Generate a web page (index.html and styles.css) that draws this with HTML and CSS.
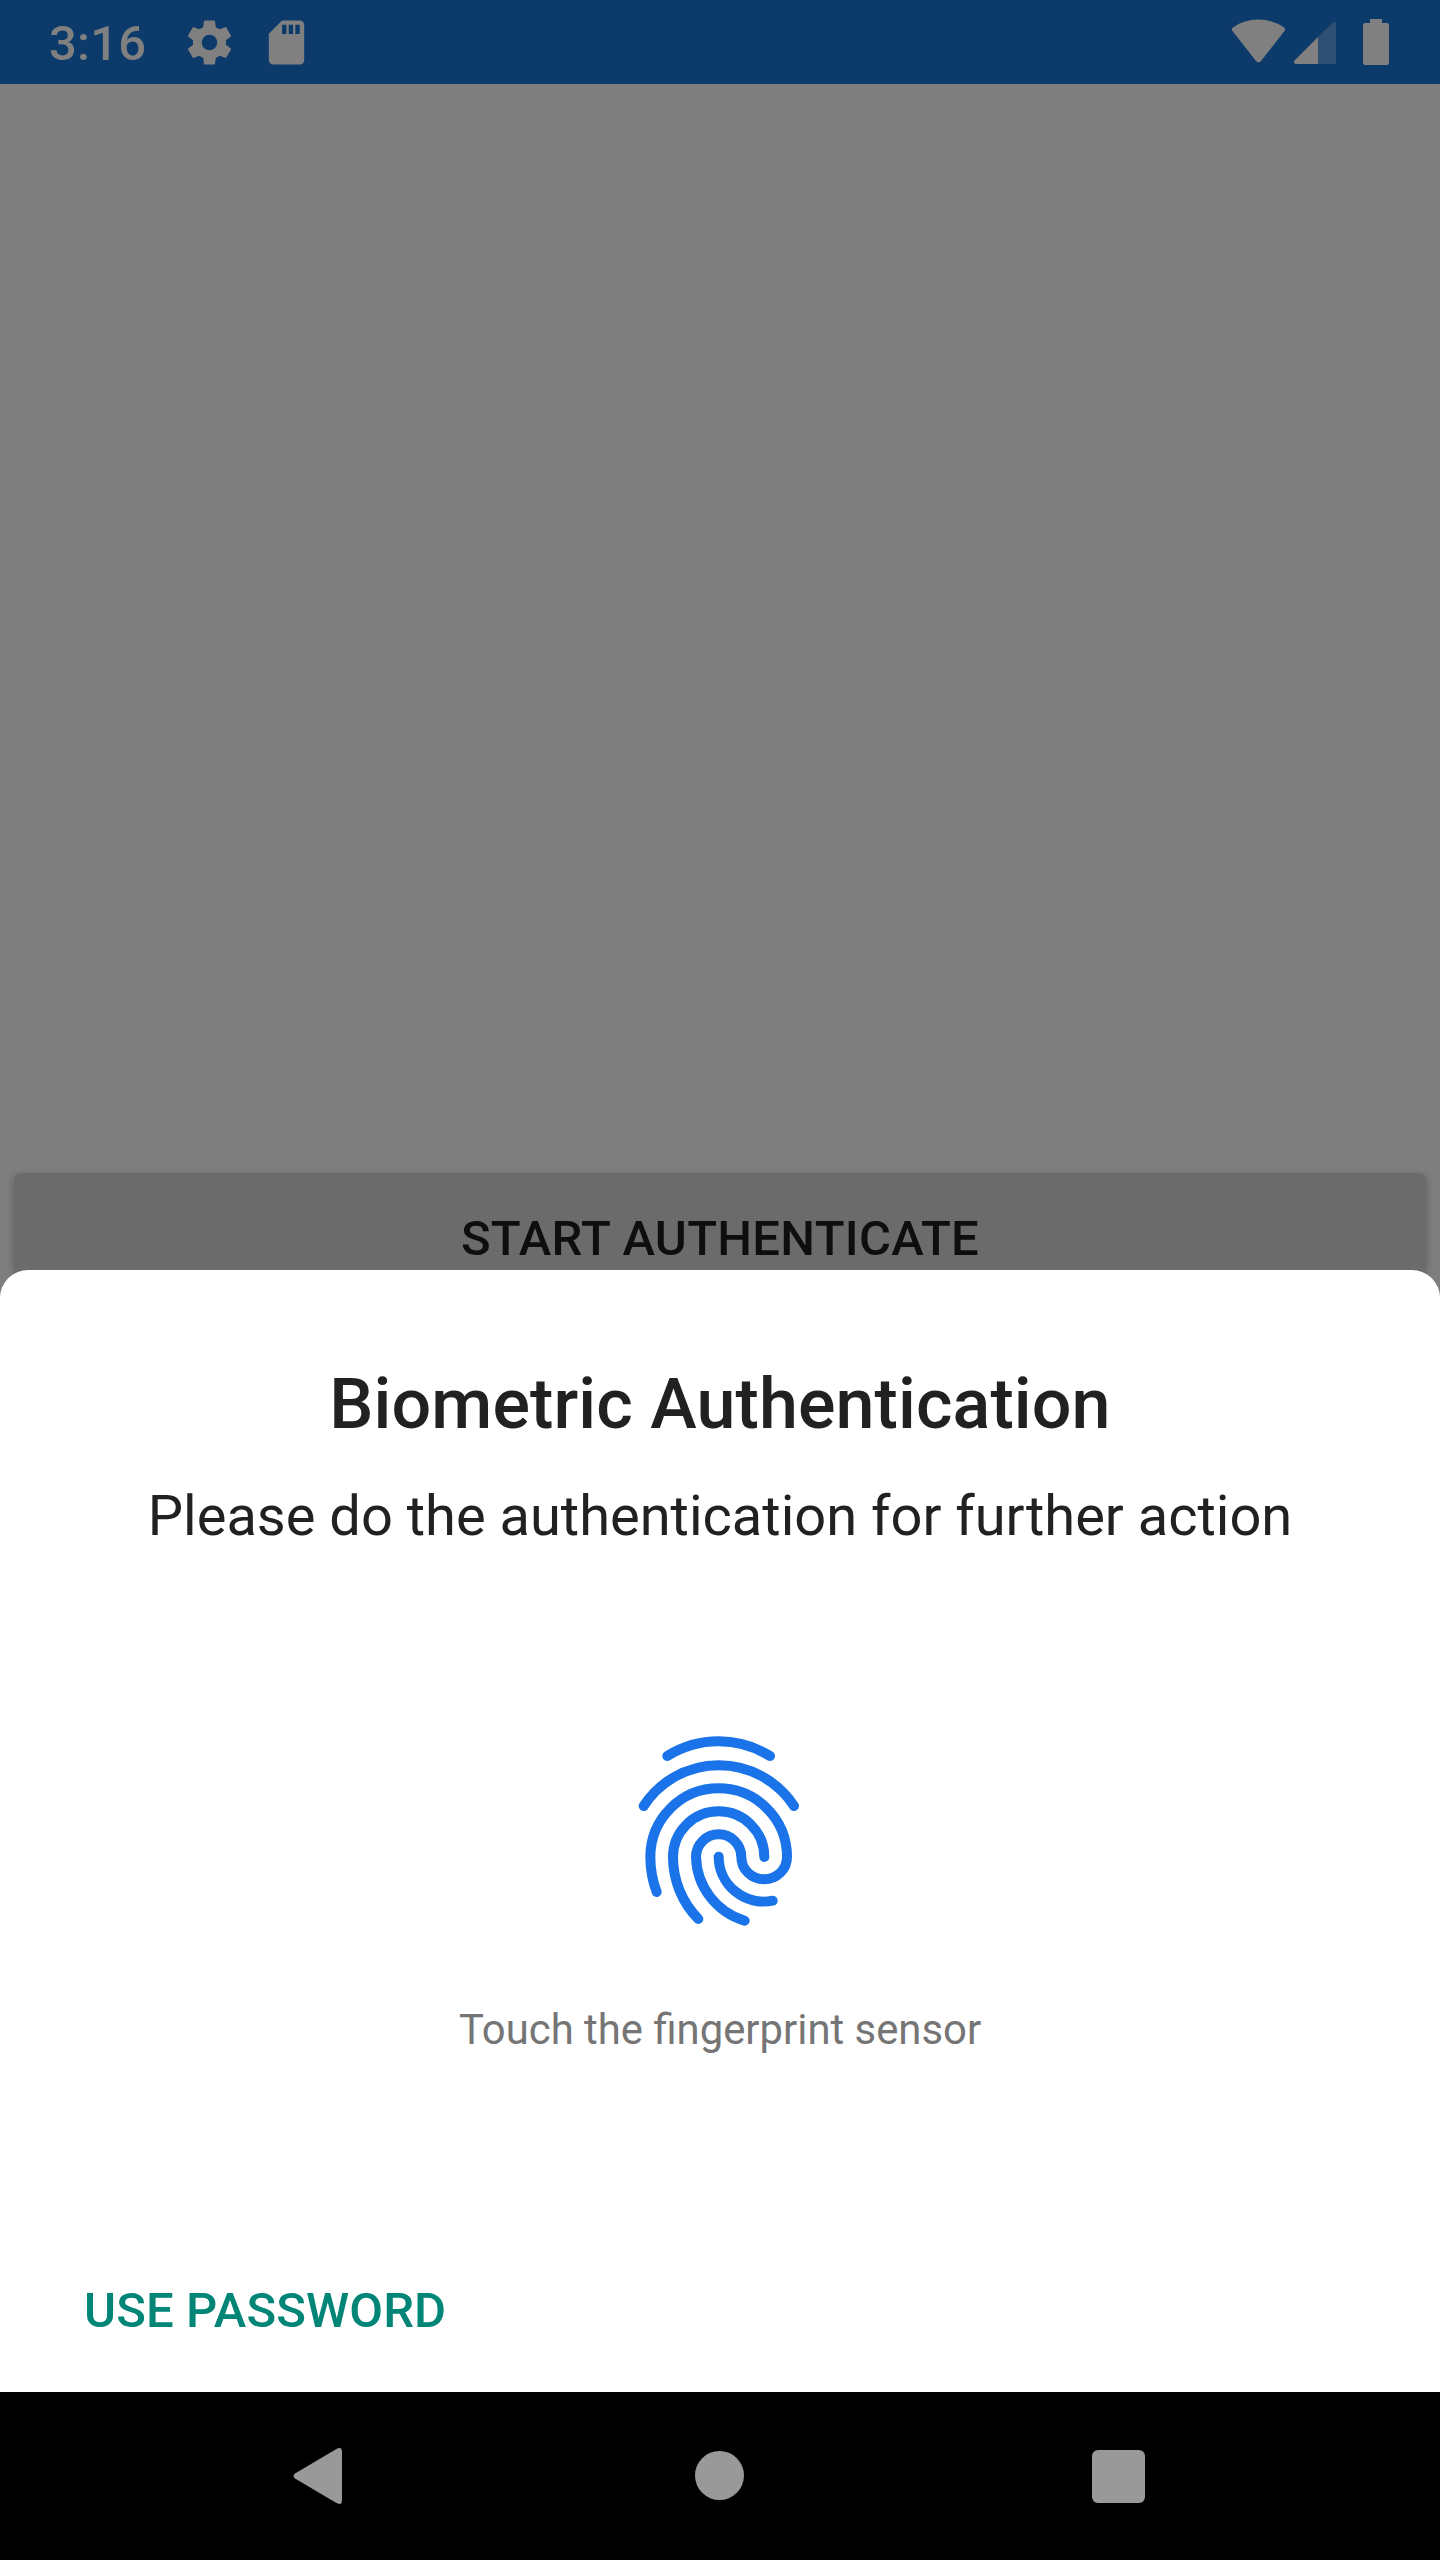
FILE: index.html
```html
<!DOCTYPE html>
<html lang="en">
<head>
<meta charset="utf-8">
<title>Biometric Authentication</title>
<link rel="stylesheet" href="styles.css">
</head>
<body>
<header class="status">
  <span class="clock">3:16</span>
  <svg class="gear" viewBox="0 0 24 24"><path d="M19.43 12.98c.04-.32.07-.64.07-.98s-.03-.66-.07-.98l2.11-1.65c.19-.15.24-.42.12-.64l-2-3.46c-.12-.22-.39-.3-.61-.22l-2.49 1c-.52-.4-1.08-.73-1.69-.98l-.38-2.65C14.46 2.18 14.25 2 14 2h-4c-.25 0-.46.18-.49.42l-.38 2.65c-.61.25-1.17.59-1.69.98l-2.49-1c-.23-.09-.49 0-.61.22l-2 3.46c-.13.22-.07.49.12.64l2.11 1.65c-.04.32-.07.65-.07.98s.03.66.07.98l-2.11 1.65c-.19.15-.24.42-.12.64l2 3.46c.12.22.39.3.61.22l2.49-1c.52.4 1.08.73 1.69.98l.38 2.65c.03.24.24.42.49.42h4c.25 0 .46-.18.49-.42l.38-2.65c.61-.25 1.17-.59 1.69-.98l2.49 1c.23.09.49 0 .61-.22l2-3.46c.12-.22.07-.49-.12-.64l-2.11-1.65zM12 15.5c-1.93 0-3.5-1.57-3.5-3.5s1.57-3.5 3.5-3.5 3.5 1.57 3.5 3.5-1.57 3.5-3.5 3.5z"/></svg>
  <svg class="card" viewBox="0 0 24 24"><path d="M18 2h-8L4 8v12c0 1.1.9 2 2 2h12c1.1 0 2-.9 2-2V4c0-1.1-.9-2-2-2zm-6 6.2h-2V4h2v4.200zm3 0h-2V4h2v4.200zm3 0h-2V4h2v4.200z"/></svg>
  <svg class="radio" viewBox="0 0 160 84">
    <path d="M2.500 31Q1 29 3 27.500Q14 19.600 28.500 19.600Q43 19.600 54 27.500Q56 29 54.500 31L31 61Q28.500 63.500 26 61Z"/>
    <path class="weak" d="M88 37L102.500 22.700Q106 21 106 24V62Q106 64 104 64H88Z"/>
    <path d="M88 37V64H66Q62.500 63 64.500 60.500Z"/>
    <path d="M140 19h12v4h5q2 0 2 2v38q0 2-2 2h-22q-2 0-2-2V25q0-2 2-2h5z"/>
  </svg>
</header>
<main class="screen"><div class="start">START AUTHENTICATE</div></main>
<section class="sheet">
  <h1 class="title">Biometric Authentication</h1>
  <p class="subtitle">Please do the authentication for further action</p>
  <svg class="finger" viewBox="0 0 720 780">
    <path d="M202 168A291 291 0 0 1 510 168"/>
    <path d="M131 318A269 269 0 0 1 582 318"/>
    <path d="M170 576A300 300 0 0 1 151 471A205 206 0 0 1 561 471A68.500 67 0 0 1 424 471A68 68 0 0 0 288 471A205 205 0 0 0 434 662"/>
    <path d="M295 657A265 265 0 0 1 219 471A137 137 0 0 1 493 471"/>
    <path d="M356 470A135 135 0 0 0 518 602"/>
  </svg>
  <p class="hint">Touch the fingerprint sensor</p>
  <a class="password">USE PASSWORD</a>
</section>
<nav class="nav">
  <svg class="back" viewBox="0 0 50 56"><path d="M43 1.200Q49 -2 49 4V52Q49 58 43 54.800L2 30.500Q-1 28 2 25.500Z"/></svg>
  <svg class="home" viewBox="0 0 50 50"><circle cx="24.500" cy="24.500" r="24.500"/></svg>
  <span class="recent"></span>
</nav>
</body>
</html>
```
FILE: styles.css
```css
body {
  margin: 0;
  width: 1440px;
  height: 2560px;
  overflow: hidden;
  display: flex;
  flex-direction: column;
  font-family: Roboto, sans-serif;
  background: #7e7e7e;
}
.status {
  flex: none;
  height: 84px;
  box-sizing: border-box;
  padding-left: 49px;
  display: flex;
  align-items: center;
  background: #0c3b6b;
  fill: #808080;
}
.clock { width: 134px; padding-top: 4px; font-size: 49px; font-weight: 500; line-height: 58px; letter-spacing: .2px; color: #808080; }
.gear, .card { width: 53px; height: 53px; }
.card { margin-left: 24px; }
.radio { width: 160px; height: 84px; margin-left: auto; margin-right: 50px; }
.weak { fill: #2f5072; }
.screen {
  flex: none;
  height: 1186px;
  display: flex;
  flex-direction: column;
  justify-content: flex-end;
}
.start {
  height: 97px;
  margin: 0 14px;
  box-sizing: border-box;
  padding-top: 37px;
  border-radius: 7px 7px 0 0;
  background: #6b6b6b;
  box-shadow: 0 3px 9px rgba(0, 0, 0, .25);
  color: #0e0e0e;
  font-size: 49px;
  font-weight: 500;
  line-height: 58px;
  letter-spacing: .28px;
  text-align: center;
  white-space: nowrap;
}
.sheet {
  position: relative;
  flex: none;
  height: 1122px;
  display: flex;
  flex-direction: column;
  align-items: center;
  background: #fff;
  border-radius: 28px 28px 0 0;
  color: #212121;
}
.title { margin: 93px 0 0; font-size: 70px; font-weight: 500; line-height: 82px; letter-spacing: .1px; }
.subtitle { margin: 38px 0 0; font-size: 56px; line-height: 66px; }
.finger {
  width: 240px;
  height: 260px;
  margin-top: 151px;
  fill: none;
  stroke: #1a73e8;
  stroke-width: 30;
  stroke-linecap: round;
}
.hint { margin: 45px 0 0; font-size: 41.85px; line-height: 50px; color: #757575; }
.password {
  align-self: flex-start;
  margin: 227px 0 0 84px;
  font-size: 49px;
  font-weight: 500;
  line-height: 58px;
  letter-spacing: .12px;
  color: #008577;
}
.nav {
  position: relative;
  flex: none;
  height: 168px;
  display: flex;
  align-items: center;
  background: #000;
  fill: #999;
}
.back { width: 50px; height: 56px; margin-left: 293px; }
.home { width: 50px; height: 50px; margin-left: 352px; }
.recent { width: 53px; height: 53px; margin-left: 346.5px; border-radius: 6px; background: #999; }
```
